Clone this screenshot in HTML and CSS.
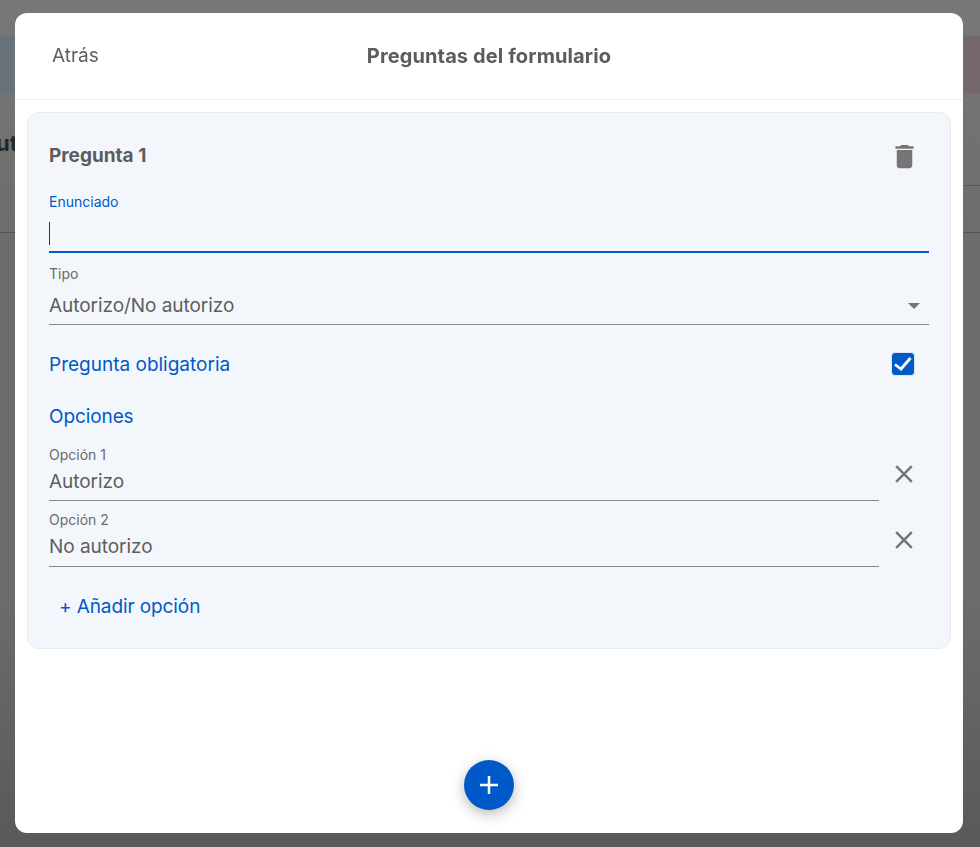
FILE: index.html
```html
<!DOCTYPE html>
<html lang="es">
<head>
<meta charset="utf-8">
<title>Preguntas del formulario</title>
<link rel="stylesheet" href="styles.css">
</head>
<body>
<div class="backdrop-page">
  <div class="page-top"></div>
  <div class="page-banner"></div>
  <div class="page-title">ut</div>
  <div class="page-tabs"></div>
  <div class="page-rule"></div>
</div>
<section class="modal">
  <header class="modal-head">
    <span class="back">Atrás</span>
    <h1 class="modal-title">Preguntas del formulario</h1>
  </header>
  <div class="modal-body">
    <div class="card">
      <div class="card-head">
        <h2 class="card-title">Pregunta 1</h2>
        <svg class="trash" viewBox="0 0 24 24" width="31" height="31"><path d="M6 19c0 1.1.9 2 2 2h8c1.1 0 2-.9 2-2V7H6v12zM19 4h-3.500l-1-1h-5l-1 1H5v2h14V4z"/></svg>
      </div>
      <div class="field focus">
        <label class="field-label">Enunciado</label>
        <div class="field-value"><span class="caret"></span></div>
      </div>
      <div class="field select">
        <label class="field-label">Tipo</label>
        <div class="field-value">Autorizo/No autorizo<svg class="arrow" viewBox="0 0 12 6" width="12" height="6"><path d="M0 0h12L6 6z"/></svg></div>
      </div>
      <div class="required">
        <span>Pregunta obligatoria</span>
        <svg class="check" viewBox="0 0 24 24" width="24" height="24"><rect x="0.500" y="0.500" width="23" height="23" rx="3.500"/><path d="M4 12.500l6 4.500 9.500-11"/></svg>
      </div>
      <div class="options-title">Opciones</div>
      <div class="option">
        <div class="field">
          <label class="field-label">Opción 1</label>
          <div class="field-value">Autorizo</div>
        </div>
        <svg class="close" viewBox="0 0 18 18" width="18" height="18"><path d="M1.200 1.200l15.600 15.600M16.800 1.200l-15.600 15.600"/></svg>
      </div>
      <div class="option">
        <div class="field">
          <label class="field-label">Opción 2</label>
          <div class="field-value">No autorizo</div>
        </div>
        <svg class="close" viewBox="0 0 18 18" width="18" height="18"><path d="M1.200 1.200l15.600 15.600M16.800 1.200l-15.600 15.600"/></svg>
      </div>
      <div class="add-option">+ Añadir opción</div>
    </div>
  </div>
  <button class="fab" aria-label="Añadir"><svg viewBox="0 0 18 18" width="18" height="18"><path d="M9 0v18M0 9h18"/></svg></button>
</section>
</body>
</html>
```
FILE: styles.css
```css
* { box-sizing: border-box; }
html, body { margin: 0; height: 100%; }
body {
  background: linear-gradient(180deg, #787878, #6c6c6c 30%, #6c6c6c 70%, #595959);
  font-family: Inter, "Liberation Sans", sans-serif;
  color: #5e5e5e;
  overflow: hidden;
}
.backdrop-page { height: 847px; overflow: hidden; }
.page-top { height: 36px; }
.page-banner { height: 57px; background: linear-gradient(90deg, #687278, #6d7275 45%, #74686a); }
.page-title {
  height: 93px;
  padding-top: 36px;
  margin-left: -4px;
  font-size: 22px;
  line-height: 28px;
  font-weight: 700;
  color: #262626;
  position: relative;
}
.page-title::after {
  content: "";
  position: absolute;
  left: 50%;
  right: 0;
  bottom: 0;
  height: 1px;
  background: #5a5a5a;
}
.page-tabs { height: 46px; }
.page-rule { height: 1px; background: #555; }
.modal {
  position: fixed;
  left: 15px;
  top: 13px;
  width: 948px;
  height: 820px;
  background: #fff;
  border-radius: 12px;
}
.modal-head {
  height: 87px;
  border-bottom: 1px solid #edf0f6;
  display: flex;
  align-items: center;
  justify-content: center;
  position: relative;
}
.back {
  position: absolute;
  left: 37px;
  top: 31px;
  font-size: 19px;
  line-height: 24px;
}
.modal-title {
  margin: 0;
  font-size: 20px;
  line-height: 24px;
  letter-spacing: .12px;
  font-weight: 700;
  color: #5c5c5c;
}
.modal-body { padding: 12px 12px 0; }
.card {
  height: 537px;
  background: #f3f7fc;
  border: 1px solid #e6ebf4;
  border-radius: 12px;
  padding: 0 21px;
}
.card-head {
  height: 74px;
  padding-right: 9.500px;
  padding-top: 12px;
  display: flex;
  align-items: center;
  justify-content: space-between;
}
.card-title {
  margin: 0;
  font-size: 19px;
  line-height: 24px;
  font-weight: 700;
  color: #5c5c5c;
}
.trash { fill: #757575; margin-top: 1px; }
.field { flex: 1; border-bottom: 1px solid #8a8a8a; }
.field-label {
  display: block;
  font-size: 14px;
  line-height: 18px;
  color: #6a6a6a;
}
.field-value {
  height: 34px;
  font-size: 19px;
  line-height: 34px;
  letter-spacing: -.05px;
  position: relative;
}
.focus { border-bottom: 2px solid #0059c8; margin-top: 6px; height: 60px; }
.focus .field-label { color: #0059c8; }
.focus .field-value { height: 32px; }
.caret {
  position: absolute;
  left: 0;
  top: 11px;
  width: 1px;
  height: 23px;
  background: #333;
}
.select { margin-top: 11px; height: 61px; padding-top: 1px; }
.select .field-value { height: 40px; padding-top: 6px; }
.arrow { position: absolute; right: 9px; top: 20px; fill: #757575; }
.required {
  height: 78px;
  display: flex;
  align-items: center;
  justify-content: space-between;
  padding-right: 14px;
  color: #0059c8;
  font-size: 19px;
}
.check rect { fill: #0059c8; stroke: #dbe7f7; stroke-width: 1; }
.check path { fill: none; stroke: #fff; stroke-width: 2.800; }
.options-title {
  height: 28px;
  font-size: 19px;
  line-height: 28px;
  letter-spacing: -.1px;
  color: #0059c8;
  margin-bottom: 9px;
}
.option {
  display: flex;
  align-items: flex-start;
  gap: 16px;
  padding-right: 16px;
  height: 65.500px;
}
.option .field { height: 61px; padding-top: 5.500px; }
.option .field-value { line-height: 36px; }
.close { fill: none; stroke: #757575; stroke-width: 2.500; flex: none; margin-top: 25px; }
.add-option {
  margin-top: 22px;
  padding-left: 10px;
  font-size: 19px;
  line-height: 28px;
  letter-spacing: -.1px;
  color: #0059c8;
}
.fab {
  position: absolute;
  left: 449px;
  top: 747px;
  width: 50px;
  height: 50px;
  border: 0;
  padding: 0;
  border-radius: 50%;
  background: #0059c8;
  box-shadow: 0 4px 14px rgba(0,0,0,.28);
  display: flex;
  align-items: center;
  justify-content: center;
}
.fab path { stroke: #fff; stroke-width: 2.500; fill: none; }
```
